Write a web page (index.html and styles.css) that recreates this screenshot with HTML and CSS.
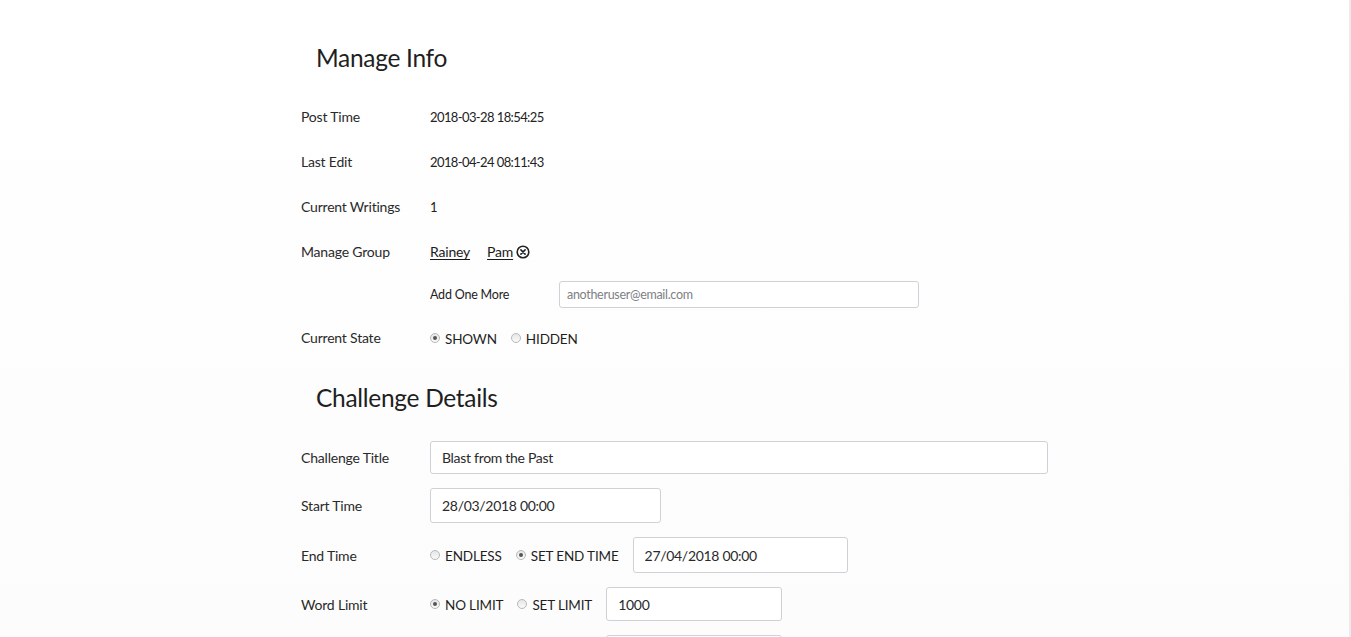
FILE: index.html
```html
<!DOCTYPE html>
<html lang="en">
<head>
<meta charset="utf-8">
<title>Manage Info</title>
<link rel="stylesheet" href="styles.css">
</head>
<body>
<div class="page">
  <main class="content">
    <h2 class="section-title">Manage Info</h2>
    <div class="row">
      <div class="label">Post Time</div>
      <div class="value">2018-03-28 18:54:25</div>
    </div>
    <div class="row">
      <div class="label">Last Edit</div>
      <div class="value">2018-04-24 08:11:43</div>
    </div>
    <div class="row">
      <div class="label">Current Writings</div>
      <div class="value">1</div>
    </div>
    <div class="row">
      <div class="label">Manage Group</div>
      <div class="value group">
        <a class="member" href="#">Rainey</a>
        <span class="member-wrap"><a class="member" href="#">Pam</a><svg class="remove" viewBox="0 0 14 14" width="14" height="14"><circle cx="7" cy="7" r="5.8" fill="none" stroke="#222" stroke-width="1.6"/><path d="M4.9 4.9 L9.1 9.1 M9.1 4.9 L4.9 9.1" stroke="#222" stroke-width="1.6" stroke-linecap="round"/></svg></span>
      </div>
    </div>
    <div class="row row-add">
      <div class="label"></div>
      <div class="value add-more">
        <span class="add-label">Add One More</span>
        <input class="field field-small" type="text" placeholder="anotheruser@email.com">
      </div>
    </div>
    <div class="row row-state">
      <div class="label">Current State</div>
      <div class="value radios">
        <label class="radio"><span class="dot checked"></span>SHOWN</label>
        <label class="radio"><span class="dot"></span>HIDDEN</label>
      </div>
    </div>

    <h2 class="section-title second">Challenge Details</h2>
    <div class="form-rows">
      <div class="frow">
        <div class="label">Challenge Title</div>
        <input class="field field-title" type="text" value="Blast from the Past">
      </div>
      <div class="frow">
        <div class="label">Start Time</div>
        <input class="field field-start" type="text" value="28/03/2018 00:00">
      </div>
      <div class="frow">
        <div class="label">End Time</div>
        <div class="radios">
          <label class="radio"><span class="dot"></span>ENDLESS</label>
          <label class="radio"><span class="dot checked"></span>SET END TIME</label>
        </div>
        <input class="field field-end" type="text" value="27/04/2018 00:00">
      </div>
      <div class="frow">
        <div class="label">Word Limit</div>
        <div class="radios">
          <label class="radio"><span class="dot checked"></span>NO LIMIT</label>
          <label class="radio"><span class="dot"></span>SET LIMIT</label>
        </div>
        <input class="field field-limit" type="text" value="1000">
      </div>
      <div class="frow">
        <div class="label"></div>
        <div class="spacer-radios"></div>
        <input class="field field-limit" type="text" value="">
      </div>
    </div>
  </main>
</div>
</body>
</html>
```
FILE: styles.css
```css
html, body {
  margin: 0;
  padding: 0;
  height: 100%;
  overflow: hidden;
}
body {
  background: #ffffff;
  font-family: Lato, "Open Sans", sans-serif;
  color: #222;
  font-size: 14px;
}
.page {
  width: 1349px;
  height: 100%;
  border-right: 2px solid #ebebeb;
  background: linear-gradient(#ffffff, #fcfcfc);
}
.content {
  width: 747px;
  margin: 0 auto;
  padding-top: 40px;
}
.section-title {
  margin: 0 0 18px 15px;
  font-size: 24.5px;
  line-height: 36px;
  font-weight: 400;
  color: #1f1f1f;
  letter-spacing: -0.3px;
}
.section-title.second {
  margin-top: 20px;
  margin-bottom: 25px;
}
.row {
  display: grid;
  grid-template-columns: 129px 1fr;
  align-items: center;
  height: 45px;
}
.row-add {
  height: 41px;
}
.row-state {
  height: 45px;
}
.label {
  color: #2a2a2a;
  letter-spacing: -0.2px;
}
.value {
  font-size: 13px;
  letter-spacing: -0.6px;
}
.group {
  display: flex;
  align-items: center;
  gap: 17px;
  font-size: 14px;
  letter-spacing: -0.2px;
}
.member {
  color: #1a1a1a;
  text-decoration: underline;
  text-underline-offset: 2px;
}
.member-wrap {
  display: flex;
  align-items: center;
  gap: 3px;
}
.remove {
  display: block;
}
.add-more {
  display: flex;
  align-items: center;
  letter-spacing: -0.2px;
}
.add-label {
  font-size: 12.5px;
  width: 129px;
}
.field {
  box-sizing: border-box;
  font-family: Lato, "Open Sans", sans-serif;
  font-size: 14px;
  letter-spacing: -0.3px;
  color: #2a2a2a;
  border: 1px solid #cfd1d6;
  border-radius: 3px;
  background: #fff;
  padding: 0 11px;
  height: 34px;
  outline: none;
}
.field-small {
  width: 360px;
  height: 27px;
  font-size: 12.5px;
  padding: 0 7px;
}
.field-small::placeholder {
  color: #7d7f86;
}
.radios {
  display: flex;
  align-items: center;
  gap: 14px;
}
.radio {
  display: flex;
  align-items: center;
  gap: 5px;
  font-size: 13.5px;
  line-height: 18px;
  padding-top: 2px;
  color: #1f1f1f;
  letter-spacing: -0.15px;
}
.dot {
  box-sizing: border-box;
  width: 10px;
  height: 10px;
  border-radius: 50%;
  border: 1px solid #b8b8b8;
  background: linear-gradient(#e6e6e6, #fafafa);
  position: relative;
  margin-top: -2px;
}
.dot.checked::after {
  content: "";
  position: absolute;
  left: 2px;
  top: 2px;
  width: 4px;
  height: 4px;
  border-radius: 50%;
  background: #555;
}
.form-rows {
  display: flex;
  flex-direction: column;
  gap: 14px;
}
.frow {
  display: flex;
  align-items: center;
}
.frow .label {
  width: 129px;
  flex: none;
}
.frow .radios {
  margin-right: 14px;
}
.field-title {
  width: 618px;
  height: 33px;
}
.field-start {
  width: 231px;
  height: 35px;
}
.field-end {
  width: 215px;
  height: 36px;
}
.field-limit {
  width: 176px;
}
.spacer-radios {
  width: 176px;
  flex: none;
}
```
